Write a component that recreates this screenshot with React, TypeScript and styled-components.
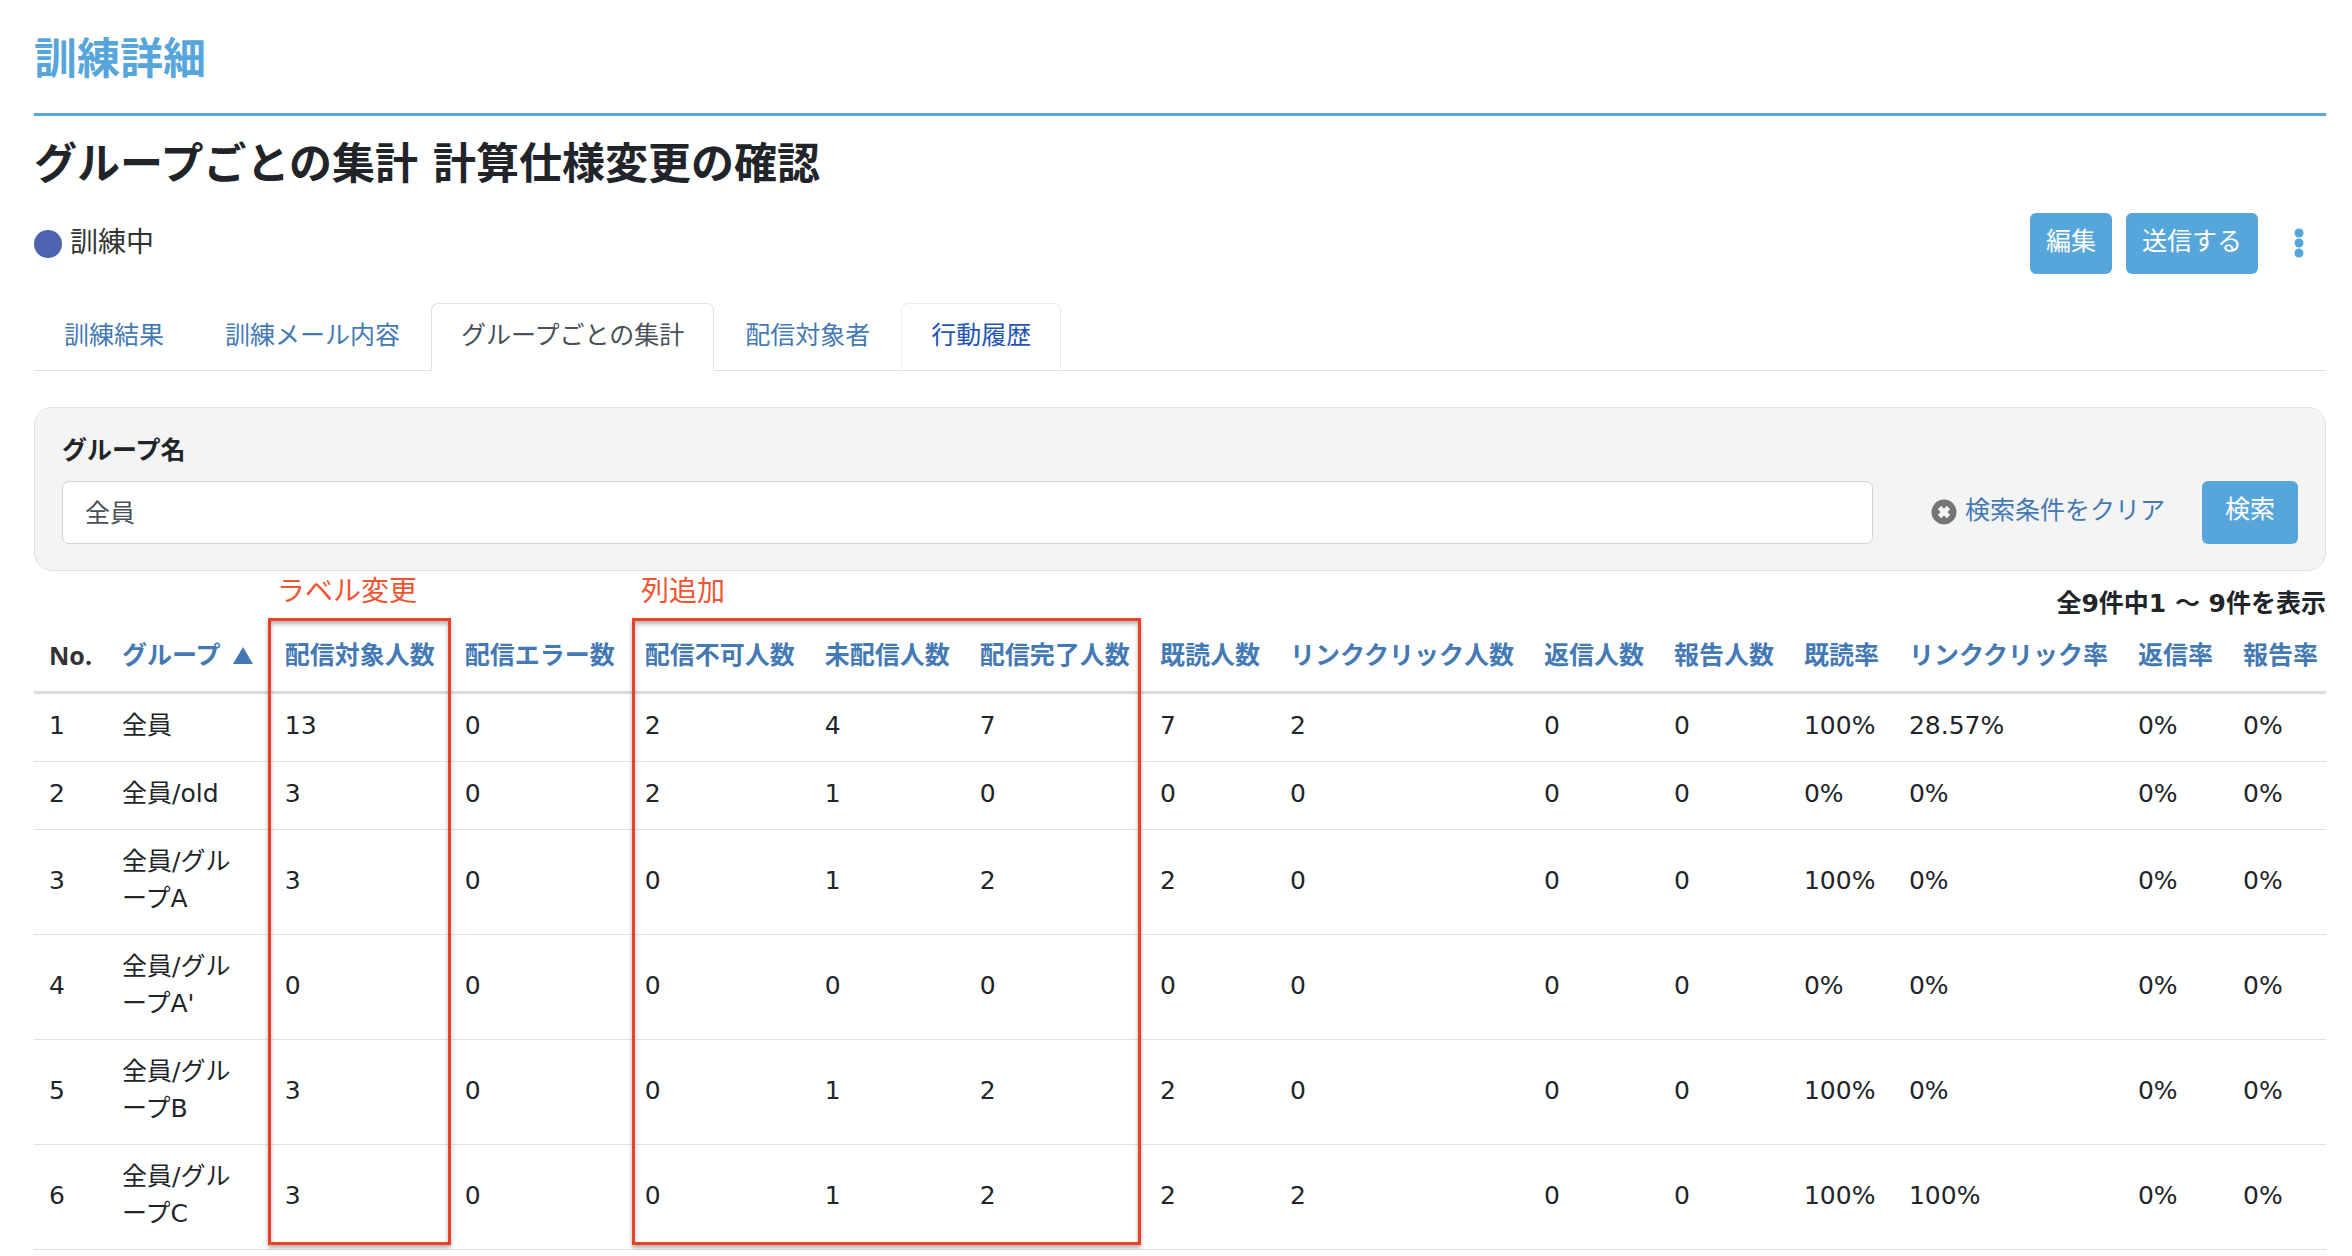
import React from "react";
import styled, { createGlobalStyle, css } from "styled-components";

const GlobalStyle = createGlobalStyle`
  * { box-sizing: border-box; }
  body {
    margin: 0;
    background: #fff;
    color: #212529;
    font: 25px/37px "DejaVu Sans", "Noto Sans CJK JP", sans-serif;
  }
  button, input { font: inherit; }
`;

const Page = styled.main`
  padding: 37px 26px 0 34px;
`;

const PageTitle = styled.h1`
  margin: 0;
  padding-bottom: 32px;
  border-bottom: 3px solid #56a6dc;
  color: #56a6dc;
  font-size: 43px;
  line-height: 44px;
`;

const DrillTitle = styled.h2`
  margin: 0;
  padding: 26px 0 22px;
  font-size: 43px;
  line-height: 44px;
`;

const StatusBar = styled.div`
  display: flex;
  align-items: center;
  justify-content: space-between;
  margin: 5px 0 29px;
`;

const Status = styled.div`
  display: flex;
  align-items: center;
  gap: 8px;
  font-size: 28px;
  color: #333;
`;

const StatusDot = styled.span`
  width: 28px;
  height: 28px;
  border-radius: 50%;
  background: #4e63b0;
`;

const StatusText = styled.span`
  padding-bottom: 2px;
`;

const Actions = styled.div`
  display: flex;
  align-items: center;
  gap: 14px;
`;

const Button = styled.button<{ $wide?: boolean }>`
  padding: 10px ${(p) => (p.$wide ? 23 : 16)}px ${(p) => (p.$wide ? 16 : 14)}px;
  border: 0;
  border-radius: 6px;
  background: #56a6dc;
  color: #fff;
  white-space: nowrap;
`;

const MenuButton = styled.button`
  display: flex;
  padding: 0 22px 2px;
  border: 0;
  background: none;
  color: #56a6dc;
`;

const Tabs = styled.nav`
  display: flex;
  gap: 1px;
  border-bottom: 1px solid #dee2e6;
`;

const Tab = styled.a<{ $state?: "active" | "hover" }>`
  margin-bottom: -1px;
  padding: 13px 29px 16px;
  border: 1px solid transparent;
  border-radius: 7px 7px 0 0;
  color: #4379b4;
  text-decoration: none;
  ${(p) =>
    p.$state === "active" &&
    css`
      border-color: #dee2e6 #dee2e6 #fff;
      background: #fff;
      color: #495057;
    `}
  ${(p) =>
    p.$state === "hover" &&
    css`
      border-color: #e9ecef #e9ecef #dee2e6;
      color: #1f55b2;
    `}
`;

const SearchPanel = styled.form`
  margin-top: 36px;
  padding: 24px 27px 26px;
  border: 1px solid #e2e2e2;
  border-radius: 18px;
  background: #f4f4f4;
`;

const FieldLabel = styled.label`
  display: block;
  margin-bottom: 12px;
  font-weight: 700;
`;

const SearchRow = styled.div`
  display: flex;
  align-items: center;
`;

const TextInput = styled.input`
  flex: 1;
  min-width: 0;
  height: 63px;
  padding: 0 22px 4px;
  border: 1px solid #ced4da;
  border-radius: 7px;
  background: #fff;
  color: #495057;
`;

const ClearLink = styled.a`
  display: flex;
  align-items: center;
  gap: 8px;
  margin: 0 37px 0 58px;
  padding-bottom: 2px;
  color: #4379b4;
  text-decoration: none;
  white-space: nowrap;
`;

const ClearText = styled.span`
  padding-bottom: 2px;
`;

const Count = styled.p`
  margin: 0;
  padding: 14px 0 4px;
  font-weight: 700;
  text-align: right;
`;

const TableArea = styled.div`
  position: relative;
`;

const Table = styled.table`
  width: 100%;
  border-collapse: separate;
  border-spacing: 0;
`;

const HeadCell = styled.th`
  padding: 11px 15px 17px;
  border-bottom: 3px solid #dcdcdc;
  color: #333;
  text-align: left;
  white-space: nowrap;
  &:first-child { font-family: "Noto Sans", "Noto Sans CJK JP", sans-serif; }
  &:last-child { padding-right: 8px; }
`;

const SortLink = styled.a`
  color: #4379b4;
  text-decoration: none;
`;

const SortMark = styled.svg`
  margin-left: 12px;
`;

const Cell = styled.td`
  padding: 13px 15px 17px;
  border-bottom: 1px solid #dee2e6;
`;

const Annotation = styled.div<{ $left: number; $width: number }>`
  position: absolute;
  left: ${(p) => p.$left}px;
  top: -8px;
  bottom: 5px;
  width: ${(p) => p.$width}px;
  border: 3px solid #ec4127;
  box-shadow: 0 3px 4px rgba(0, 0, 0, 0.3), inset 0 3px 4px rgba(0, 0, 0, 0.3);
  pointer-events: none;
`;

const AnnotationLabel = styled.span`
  position: absolute;
  left: 6px;
  top: -48px;
  color: #ef5532;
  font-size: 28px;
  white-space: nowrap;
`;

const columns = [
  "配信対象人数", "配信エラー数", "配信不可人数", "未配信人数", "配信完了人数",
  "既読人数", "リンククリック人数", "返信人数", "報告人数", "既読率",
  "リンククリック率", "返信率", "報告率",
];

const rows = [
  ["1", "全員", "13", "0", "2", "4", "7", "7", "2", "0", "0", "100%", "28.57%", "0%", "0%"],
  ["2", "全員/old", "3", "0", "2", "1", "0", "0", "0", "0", "0", "0%", "0%", "0%", "0%"],
  ["3", "全員/グループA", "3", "0", "0", "1", "2", "2", "0", "0", "0", "100%", "0%", "0%", "0%"],
  ["4", "全員/グループA'", "0", "0", "0", "0", "0", "0", "0", "0", "0", "0%", "0%", "0%", "0%"],
  ["5", "全員/グループB", "3", "0", "0", "1", "2", "2", "0", "0", "0", "100%", "0%", "0%", "0%"],
  ["6", "全員/グループC", "3", "0", "0", "1", "2", "2", "2", "0", "0", "100%", "100%", "0%", "0%"],
];

export default function App() {
  return (
    <>
      <GlobalStyle />
      <Page lang="ja">
        <PageTitle>訓練詳細</PageTitle>
        <DrillTitle>グループごとの集計 計算仕様変更の確認</DrillTitle>

        <StatusBar>
          <Status>
            <StatusDot />
            <StatusText>訓練中</StatusText>
          </Status>
          <Actions>
            <Button type="button">編集</Button>
            <Button type="button">送信する</Button>
            <MenuButton type="button" aria-label="メニュー">
              <svg width="10" height="30" viewBox="0 0 10 30" fill="currentColor">
                <circle cx="5" cy="5" r="4.5" />
                <circle cx="5" cy="15" r="4.5" />
                <circle cx="5" cy="25" r="4.5" />
              </svg>
            </MenuButton>
          </Actions>
        </StatusBar>

        <Tabs>
          <Tab href="#result">訓練結果</Tab>
          <Tab href="#mail">訓練メール内容</Tab>
          <Tab href="#groups" $state="active">グループごとの集計</Tab>
          <Tab href="#targets">配信対象者</Tab>
          <Tab href="#history" $state="hover">行動履歴</Tab>
        </Tabs>

        <SearchPanel>
          <FieldLabel htmlFor="group-name">グループ名</FieldLabel>
          <SearchRow>
            <TextInput id="group-name" type="text" defaultValue="全員" />
            <ClearLink href="#clear">
              <svg width="26" height="26" viewBox="0 0 26 26">
                <circle cx="13" cy="13" r="12.5" fill="#757575" />
                <path d="M8.5 8.5L17.5 17.5M17.5 8.5L8.5 17.5" stroke="#f4f4f4" strokeWidth="4.6" />
              </svg>
              <ClearText>検索条件をクリア</ClearText>
            </ClearLink>
            <Button type="button" $wide>検索</Button>
          </SearchRow>
        </SearchPanel>

        <Count>全9件中1 ～ 9件を表示</Count>

        <TableArea>
          <Table>
            <thead>
              <tr>
                <HeadCell>No.</HeadCell>
                <HeadCell>
                  <SortLink href="#sort-group">
                    グループ
                    <SortMark width="20" height="17" viewBox="0 0 20 17" fill="currentColor">
                      <path d="M10 0L20 17H0Z" />
                    </SortMark>
                  </SortLink>
                </HeadCell>
                {columns.map((name) => (
                  <HeadCell key={name}>
                    <SortLink href="#sort">{name}</SortLink>
                  </HeadCell>
                ))}
              </tr>
            </thead>
            <tbody>
              {rows.map((row) => (
                <tr key={row[0]}>
                  {row.map((value, i) => (
                    <Cell key={i}>{value}</Cell>
                  ))}
                </tr>
              ))}
            </tbody>
          </Table>
          <Annotation $left={234} $width={183}>
            <AnnotationLabel>ラベル変更</AnnotationLabel>
          </Annotation>
          <Annotation $left={598} $width={509}>
            <AnnotationLabel>列追加</AnnotationLabel>
          </Annotation>
        </TableArea>
      </Page>
    </>
  );
}
